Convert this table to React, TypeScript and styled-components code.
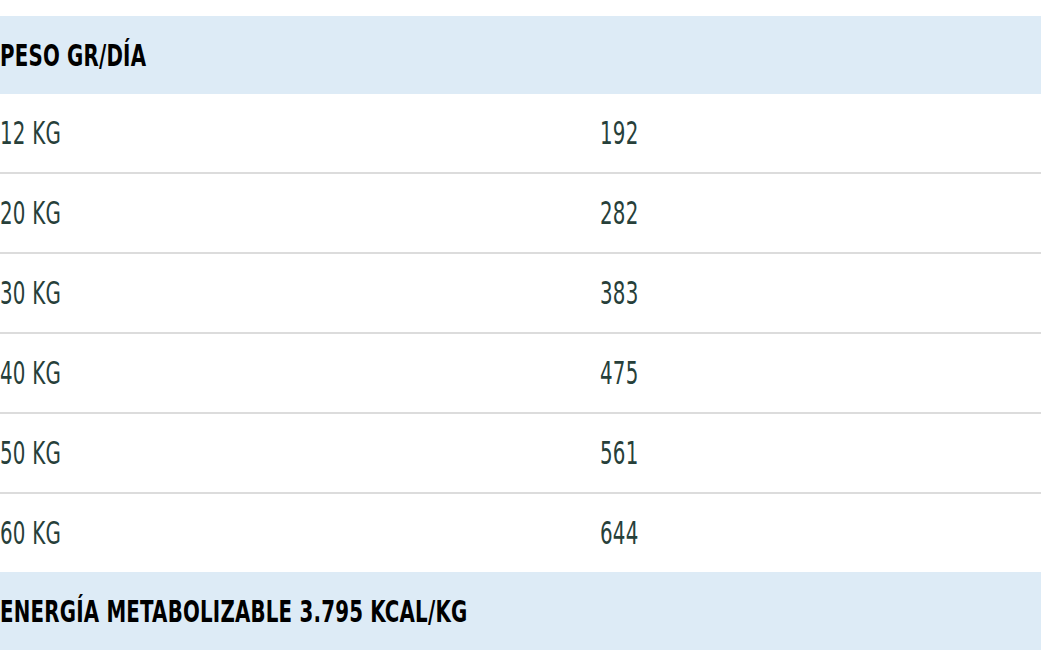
import React from "react";
import styled, { createGlobalStyle } from "styled-components";

const GlobalStyle = createGlobalStyle`
  html, body {
    margin: 0;
    padding: 0;
    background: #fff;
  }
`;

type Row = { weight: string; grams: string };

const rows: Row[] = [
  { weight: "12 KG", grams: "192" },
  { weight: "20 KG", grams: "282" },
  { weight: "30 KG", grams: "383" },
  { weight: "40 KG", grams: "475" },
  { weight: "50 KG", grams: "561" },
  { weight: "60 KG", grams: "644" },
];

const Page = styled.div`
  padding-top: 16px;
  width: 1041px;
`;

const Table = styled.div`
  display: flex;
  flex-direction: column;
  font-family: "DejaVu Sans", sans-serif;
  font-stretch: condensed;
`;

const Band = styled.div`
  height: 78px;
  background: #ddebf6;
  display: flex;
  align-items: center;
`;

const DataRow = styled.div<{ $last?: boolean }>`
  height: 78px;
  display: grid;
  grid-template-columns: 600px 1fr;
  align-items: center;
  border-bottom: ${(p) => (p.$last ? "none" : "2px solid #dcdcdc")};
`;

const Text = styled.span<{ $bold?: boolean }>`
  display: inline-block;
  font-size: ${(p) => (p.$bold ? "31px" : "31.5px")};
  font-weight: ${(p) => (p.$bold ? 700 : 400)};
  color: ${(p) => (p.$bold ? "#000" : "#27403a")};
  transform: scaleX(${(p) => (p.$bold ? 0.71 : 0.7)});
  transform-origin: left center;
  white-space: nowrap;
  letter-spacing: 0.3px;
`;

export default function App() {
  return (
    <Page>
      <GlobalStyle />
      <Table>
        <Band>
          <Text $bold>PESO GR/DÍA</Text>
        </Band>
        {rows.map((r, i) => (
          <DataRow key={r.weight} $last={i === rows.length - 1}>
            <Text>{r.weight}</Text>
            <Text>{r.grams}</Text>
          </DataRow>
        ))}
        <Band>
          <Text $bold>ENERGÍA METABOLIZABLE 3.795 KCAL/KG</Text>
        </Band>
      </Table>
    </Page>
  );
}
